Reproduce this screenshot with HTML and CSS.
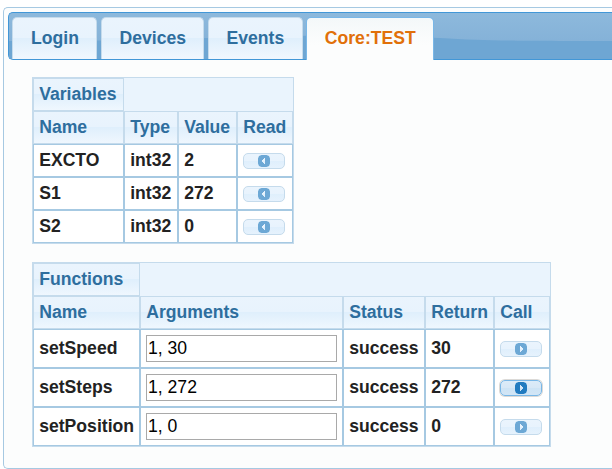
FILE: index.html
```html
<!DOCTYPE html>
<html lang="en">
<head>
<meta charset="utf-8">
<title>Core:TEST</title>
<link rel="stylesheet" href="styles.css">
</head>
<body>
<svg class="defs" aria-hidden="true">
  <symbol id="left" viewBox="0 0 12 12"><path fill-rule="evenodd" d="M3.5 0H8.5L11 1L12 3.5V8.5L11 11L8.5 12H3.5L1 11L0 8.5V3.5L1 1ZM7 3V9H6V8H5V7H4V5H5V4H6V3Z"/></symbol>
  <symbol id="right" viewBox="0 0 12 12"><path fill-rule="evenodd" d="M3.5 0H8.5L11 1L12 3.5V8.5L11 11L8.5 12H3.5L1 11L0 8.5V3.5L1 1ZM5 3V9H6V8H7V7H8V5H7V4H6V3Z"/></symbol>
</svg>
<div class="tabs">
  <nav class="tab-bar">
    <svg class="gloss" viewBox="0 0 602 46" preserveAspectRatio="none"><path d="M0 28C80 28 130 27 200 25C280 22 360 22 430 25C480 28 510 28 602 28V46H0Z"/></svg>
    <a class="tab login">Login</a>
    <a class="tab devices">Devices</a>
    <a class="tab events">Events</a>
    <a class="tab active">Core:TEST</a>
  </nav>
  <main class="panel">
    <table class="grid variables">
      <colgroup><col class="w91"><col class="w54"><col class="w59"><col class="w56"></colgroup>
      <thead>
        <tr><th>Variables</th><td class="filler" colspan="3"></td></tr>
        <tr><th>Name</th><th>Type</th><th>Value</th><th>Read</th></tr>
      </thead>
      <tbody>
        <tr><td>EXCTO</td><td>int32</td><td>2</td><td><button><svg><use href="#left"/></svg></button></td></tr>
        <tr><td>S1</td><td>int32</td><td>272</td><td><button><svg><use href="#left"/></svg></button></td></tr>
        <tr><td>S2</td><td>int32</td><td>0</td><td><button><svg><use href="#left"/></svg></button></td></tr>
      </tbody>
    </table>
    <table class="grid functions">
      <colgroup><col class="w107"><col class="w203"><col class="w82"><col class="w69"><col class="w56"></colgroup>
      <thead>
        <tr><th>Functions</th><td class="filler" colspan="4"></td></tr>
        <tr><th>Name</th><th>Arguments</th><th>Status</th><th>Return</th><th>Call</th></tr>
      </thead>
      <tbody>
        <tr><td>setSpeed</td><td><input value="1, 30"></td><td>success</td><td>30</td><td><button><svg><use href="#right"/></svg></button></td></tr>
        <tr><td>setSteps</td><td><input value="1, 272"></td><td>success</td><td>272</td><td><button class="focused"><svg><use href="#right"/></svg></button></td></tr>
        <tr><td>setPosition</td><td><input value="1, 0"></td><td>success</td><td>0</td><td><button><svg><use href="#right"/></svg></button></td></tr>
      </tbody>
    </table>
  </main>
</div>
</body>
</html>
```

FILE: styles.css
```css
* { box-sizing: border-box; }
body {
  margin: 0;
  padding: 7px 0 0 3px;
  background: #fff;
  font: bold 17.6px/20px "Liberation Sans", Arial, sans-serif;
  color: #222;
}
.defs { display: none; }
.tabs {
  height: 462px;
  padding: 4px 0 4px 4px;
  border: 1px solid #a6c9e2;
  border-right: 0;
  border-radius: 5px 0 0 5px;
  background: #fcfdfd;
}
.tab-bar {
  position: relative;
  display: flex;
  align-items: flex-start;
  gap: 4px;
  height: 48px;
  padding: 4px 0 0 3px;
  border: 1px solid #4297d7;
  border-right: 0;
  border-radius: 5px 0 0 5px;
  background: linear-gradient(#8db9dc, #85b2d8 60%);
}
.gloss { position: absolute; left: 0; top: 0; width: 100%; height: 46px; fill: #6ea6d3; border-radius: 4px 0 0 4px; }
.tab {
  position: relative;
  height: 42px;
  padding: 10px 0 0 17.5px;
  border: 1px solid #c5dbec;
  border-bottom: 0;
  border-radius: 5px 5px 0 0;
  background: linear-gradient(#eaf4fd 0, #e8f3fd 49%, #dfeffc 50%, #f1f7fe 100%);
  color: #2e6e9e;
}
.login { width: 85px; padding-left: 18px; }
.devices { width: 103px; }
.events { width: 95px; }
.active {
  width: 128px;
  height: 43px;
  margin-left: -1px;
  padding-left: 17.8px;
  border-color: #79b7e7;
  background: linear-gradient(#f4f8f9, #fcfdfd 65%);
  color: #e17009;
}
.panel { padding: 17px 0 0 24px; }
.grid {
  table-layout: fixed;
  border: 1px solid #c5dbec;
  border-collapse: separate;
  border-spacing: 0;
  background: #eaf4fd;
}
.variables { width: 262px; }
.functions { width: 519px; margin-top: 18px; }
.w54 { width: 54px; }
.w56 { width: 56px; }
.w59 { width: 59px; }
.w69 { width: 69px; }
.w82 { width: 82px; }
.w91 { width: 91px; }
.w107 { width: 107px; }
.w203 { width: 203px; }
th, td { height: 33px; padding: 0 0 1px 5.2px; text-align: left; vertical-align: middle; white-space: nowrap; }
th {
  border: 1px solid #c5dbec;
  background: linear-gradient(#eaf4fd 0, #e8f3fd 49%, #dfeffc 50%, #eff7fe 100%);
  color: #2e6e9e;
}
td { border: 1px solid #a6c9e2; background: #fff; }
td.filler { border: 0; background: #eaf4fd; }
.functions tbody td { height: 39px; }
td:has(button), td:has(input) { padding-left: 5px; }
button {
  display: flex;
  align-items: center;
  justify-content: center;
  width: 42px;
  height: 16px;
  margin: 1px 0 0;
  padding: 0;
  border: 1px solid #c5dbec;
  border-radius: 5px;
  background: linear-gradient(#eaf4fd 0, #e8f3fd 49%, #dfeffc 50%, #e6f2fd 100%);
  color: #6da8d5;
}
.functions button { margin-top: 2px; }
button svg { width: 12px; height: 12px; fill: currentColor; }
button.focused {
  border-color: #79b7e7;
  background: linear-gradient(#dcebf8 0, #d8e8f6 49%, #cde3f5 50%, #d2e6f6 100%);
  color: #217bc0;
  box-shadow: 0 0 0 1px #dcdad7;
}
input {
  display: block;
  width: 191px;
  height: 27px;
  margin: 0;
  padding: 0 1px;
  border: 1px solid #a9a9a9;
  background: #fff;
  color: #000;
  font: 17.6px "Liberation Sans", Arial, sans-serif;
}
```
